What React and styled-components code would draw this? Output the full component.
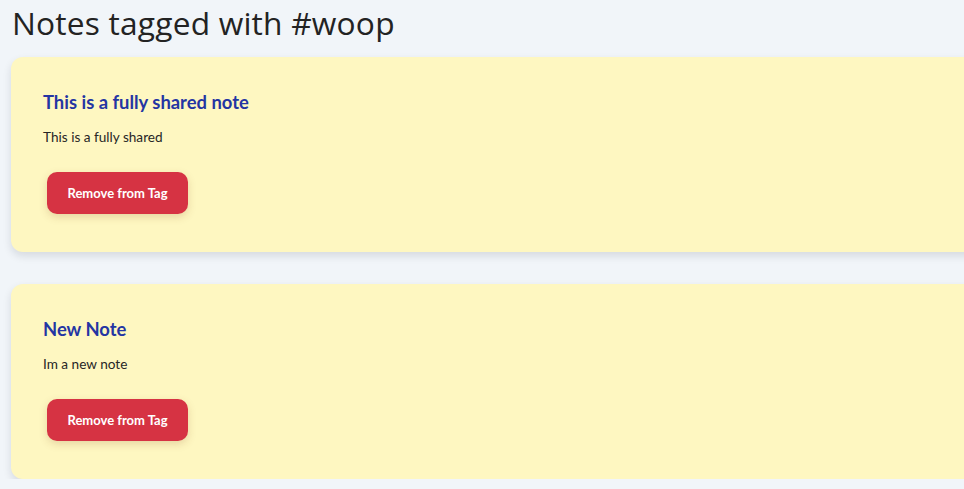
import React from 'react';
import styled, { createGlobalStyle } from 'styled-components';

const GlobalStyle = createGlobalStyle`
   html, body {
      margin: 0;
      padding: 0;
      background: #f1f5f9;
      overflow: hidden;
   }
`;

const notes = [
   { id: 1, title: 'This is a fully shared note', body: 'This is a fully shared' },
   { id: 2, title: 'New Note', body: 'Im a new note' },
];

const NoteCard = ({ note }) => {
   const { title, body } = note;

   return (
      <Card>
         <CardTitle>{title}</CardTitle>
         <CardBody>{body}</CardBody>
         <RemoveButton type="button">Remove from Tag</RemoveButton>
      </Card>
   );
};

const App = () => {
   return (
      <>
         <GlobalStyle />
         <Page>
            <Heading>Notes tagged with #woop</Heading>
            <CardList>
               {notes.map(note => (
                  <NoteCard key={note.id} note={note} />
               ))}
            </CardList>
         </Page>
      </>
   );
};

export default App;

const Page = styled.div`
   padding: 0 0 0 11px;
   width: 1020px;
`;

const Heading = styled.h1`
   margin: 0;
   padding-left: 1px;
   font-family: 'Open Sans', 'Liberation Sans', sans-serif;
   font-weight: 400;
   font-size: 31.7px;
   line-height: 46px;
   color: #232323;
   letter-spacing: 0.2px;
`;

const CardList = styled.div`
   display: flex;
   flex-direction: column;
   gap: 32px;
   margin-top: 11px;
`;

const Card = styled.div`
   display: flex;
   flex-direction: column;
   align-items: flex-start;
   padding: 32px 32px 38px 32px;
   background: #fef7c1;
   border-radius: 12px;
   box-shadow: 0 4px 8px rgba(15, 23, 42, 0.12);
`;

const CardTitle = styled.h2`
   margin: 0;
   font-family: Lato, 'Liberation Sans', sans-serif;
   font-weight: 700;
   font-size: 18.4px;
   line-height: 26px;
   color: #2435a3;
`;

const CardBody = styled.p`
   margin: 12px 0 0 0;
   font-family: Lato, 'Liberation Sans', sans-serif;
   font-size: 13.6px;
   line-height: 20px;
   color: #262626;
`;

const RemoveButton = styled.button`
   margin: 25px 0 0 4px;
   width: 141px;
   height: 42px;
   border: none;
   border-radius: 10px;
   background: #d63343;
   color: #ffffff;
   font-family: Lato, 'Liberation Sans', sans-serif;
   font-weight: 700;
   font-size: 13px;
   box-shadow: 0 3px 8px rgba(120, 60, 20, 0.18);
   cursor: pointer;
`;
